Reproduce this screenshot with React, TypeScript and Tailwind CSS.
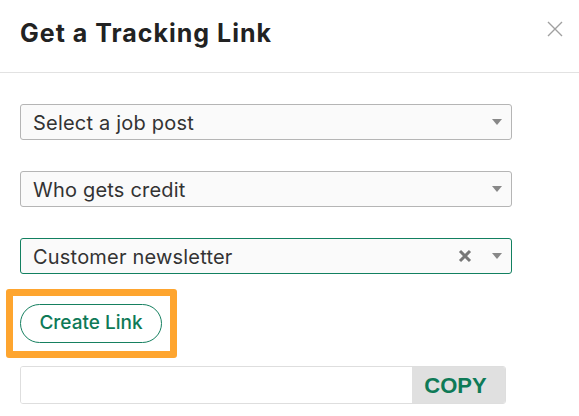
import React from "react";

const Caret = () => (
  <svg width="10" height="6" viewBox="0 0 10 6" className="shrink-0">
    <path d="M0 0 L10 0 L5 6 Z" fill="#888" />
  </svg>
);

const ClearX = () => (
  <svg width="14" height="14" viewBox="0 0 14 14" className="shrink-0">
    <path d="M2 2 L12 12 M12 2 L2 12" stroke="#777" strokeWidth="3" strokeLinecap="butt" />
  </svg>
);

type SelectProps = {
  label: string;
  active?: boolean;
  clearable?: boolean;
};

const FakeSelect = ({ label, active, clearable }: SelectProps) => (
  <div
    className={`flex h-[36px] w-[492px] items-center rounded-[3px] border bg-[#fafafa] pl-[12px] pr-[9px] ${
      active ? "border-[#128060]" : "border-[#b5b5b5]"
    }`}
  >
    <span className="flex-1 pt-[2px] text-[20px] leading-none tracking-[0.2px] text-[#333]">{label}</span>
    {clearable && (
      <span className="mr-[20px] flex items-center">
        <ClearX />
      </span>
    )}
    <Caret />
  </div>
);

export default function App() {
  return (
    <div className="h-[416px] w-[579px] bg-white font-['Inter',sans-serif]">
      {/* header */}
      <div className="flex h-[73px] items-start justify-between border-b border-[#e2e2e2] pl-[20px] pr-[16px]">
        <h1 className="mt-[18px] text-[25px] font-bold leading-[30px] tracking-[1px] text-[#222]">
          Get a Tracking Link
        </h1>
        <button className="mt-[21px]" aria-label="Close">
          <svg width="16" height="16" viewBox="0 0 16 16">
            <path d="M1 1 L15 15 M15 1 L1 15" stroke="#a0a0a0" strokeWidth="1.4" />
          </svg>
        </button>
      </div>

      {/* body */}
      <div className="flex flex-col pl-[20px] pt-[31px]">
        <div className="flex flex-col gap-[31px]">
          <FakeSelect label="Select a job post" />
          <FakeSelect label="Who gets credit" />
          <FakeSelect label="Customer newsletter" active clearable />
        </div>

        <div className="-ml-[14px] mt-[15px] w-[171px] rounded-[3px] border-[7px] border-[#fea52f] px-[7px] py-[8px]">
          <button className="flex h-[39px] w-[142px] items-center justify-center rounded-full border border-[#168060] text-[19px] font-medium text-[#0e7a57]">
            Create Link
          </button>
        </div>

        <div className="mt-[8px] flex h-[38px] w-[486px] overflow-hidden rounded-[3px] border border-[#dedede]">
          <div className="flex-1 bg-white" />
          <button className="w-[93px] bg-[#e0e0e0] pr-[6px] text-[22px] font-bold text-[#0e7a57] font-['Liberation_Sans',sans-serif]">
            COPY
          </button>
        </div>
      </div>
    </div>
  );
}
